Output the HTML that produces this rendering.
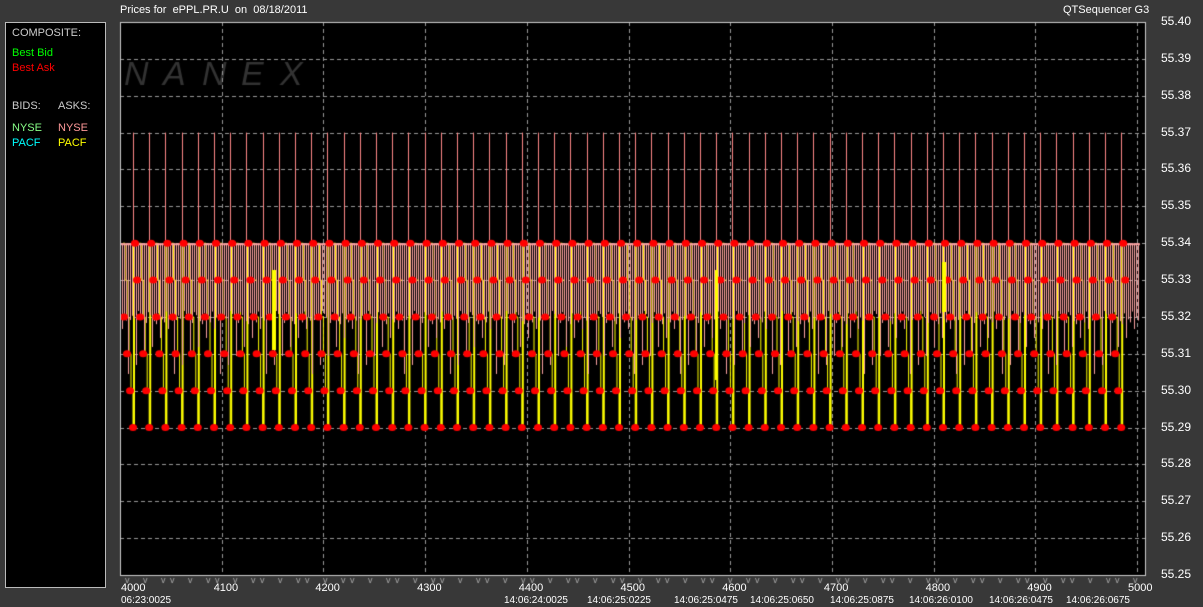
<!DOCTYPE html>
<html><head><meta charset="utf-8">
<style>
body{margin:0;width:1203px;height:607px;background:#383838;overflow:hidden;font-family:"Liberation Sans",sans-serif;font-size:11px;color:#fff;position:relative}
.a{position:absolute;white-space:nowrap}
#lp{position:absolute;left:5px;top:22px;width:99px;height:564px;background:#000;border:1px solid #bbb}
#cv{position:absolute;left:0;top:0}
.y{position:absolute;left:1161px;font-size:12px;color:#fff}
</style></head><body>
<div class="a" style="left:120px;top:4px">Prices for&nbsp; ePPL.PR.U&nbsp; on&nbsp; 08/18/2011</div>
<div class="a" style="left:1063px;top:4px">QTSequencer G3</div>
<div id="lp">
<div class="a" style="left:6px;top:4px;color:#ccc">COMPOSITE:</div>
<div class="a" style="left:6px;top:24px;color:#0f0">Best Bid</div>
<div class="a" style="left:6px;top:39px;color:#f00">Best Ask</div>
<div class="a" style="left:6px;top:77px;color:#ccc">BIDS:</div>
<div class="a" style="left:52px;top:77px;color:#ccc">ASKS:</div>
<div class="a" style="left:6px;top:99px;color:#8f8">NYSE</div>
<div class="a" style="left:52px;top:99px;color:#f99">NYSE</div>
<div class="a" style="left:6px;top:114px;color:#0ff">PACF</div>
<div class="a" style="left:52px;top:114px;color:#ff0">PACF</div>
</div>
<canvas id="cv" width="1203" height="607"></canvas>
<div id="lbl"></div>
<script>
var c=document.getElementById('cv').getContext('2d');
var L=120,T=22,R=1146,B=575;
c.fillStyle='#000';c.fillRect(L,T,R-L,B-T);
function Y(p){return T+(55.40-p)/0.01*36.87;}
c.font='italic 34px "Liberation Sans",sans-serif';c.fillStyle='#333';
var nx=['N','A','N','E','X'];for(var i=0;i<5;i++)c.fillText(nx[i],124+i*39,85);
c.strokeStyle='#999';c.setLineDash([4,3]);c.lineWidth=1;
for(var k=1;k<15;k++){var y=Math.round(Y(55.40-k*0.01))+.5;c.beginPath();c.moveTo(L,y);c.lineTo(R,y);c.stroke();}
for(var k=1;k<=10;k++){var x=Math.round(L+k*101.7)+.5;c.beginPath();c.moveTo(x,T);c.lineTo(x,B);c.stroke();}
c.setLineDash([]);
var y34=Y(55.34),y32=Y(55.32),y37=Y(55.37),y29=Y(55.29);
var P=16.2;
// yellow first
for(var i=0;i<62;i++){var x0=133+i*P;if(x0>1135)break;
 c.strokeStyle='#ff0';c.lineWidth=1;c.beginPath();
 var xs=x0-10;c.moveTo(xs,y34);
 for(var s=0;s<=5;s++){var yy=Y(55.34-s*0.01);c.lineTo(xs+s*2,yy);c.lineTo(xs+s*2+2,yy);}
 c.lineTo(x0+1,y29);c.stroke();
 c.lineWidth=2;c.beginPath();c.moveTo(x0+1,y29);c.lineTo(x0+1,y34);c.stroke();c.lineWidth=1;
}
// pink band
c.strokeStyle='#f9a0a0';
for(var x=122;x<1140;x+=2){var d=(x*37)%23;c.beginPath();c.moveTo(x+.5,y34);c.lineTo(x+.5,y32+ (d%3==0? d*3 : d*0.6)-6);c.stroke();}
c.fillStyle='#f9a0a0';c.fillRect(L,y34,R-L-6,2);
for(var i=0;i<62;i++){var x0=133+i*P;if(x0>1135)break;
 c.strokeStyle='#f88';c.beginPath();c.moveTo(Math.round(x0)+.5,y37);c.lineTo(Math.round(x0)+.5,y34);c.stroke();
 c.fillStyle='#f00';
 var dx=[2,4,-9,-6,-3,0];
 for(var s=0;s<6;s++){c.beginPath();c.ellipse(x0+dx[s],Y(55.34-s*0.01),4,3.5,0,0,7);c.fill();}
}
c.fillStyle='#ff0';c.fillRect(272,270,4,80);c.fillRect(715,270,3,110);c.fillRect(942,262,4,50);
c.strokeStyle='#ccc';c.strokeRect(L+.5,T+.5,R-L-1,B-T);
c.fillStyle='#aaa';c.font='9px "Liberation Sans",sans-serif';
for(var x=125;x<1140;x+=9){if((x*7)%5<3)c.fillText('v',x,583);}
var h='';
var pr=['55.40','55.39','55.38','55.37','55.36','55.35','55.34','55.33','55.32','55.31','55.30','55.29','55.28','55.27','55.26','55.25'];
for(var k=0;k<16;k++)h+='<div class="y" style="top:'+(Y(55.40-k*0.01)-8)+'px">'+pr[k]+'</div>';
for(var k=0;k<=10;k++)h+='<div class="a" style="left:'+(k==10?1128:L+1+k*101.7-(k?9:0))+'px;top:582px">'+(4000+k*100)+'</div>';
var t=[[121,'06:23:0025'],[504,'14:06:24:0025'],[587,'14:06:25:0225'],[674,'14:06:25:0475'],[750,'14:06:25:0650'],[830,'14:06:25:0875'],[909,'14:06:26:0100'],[989,'14:06:26:0475'],[1066,'14:06:26:0675']];
t.forEach(function(a){h+='<div class="a" style="left:'+a[0]+'px;top:595px;font-size:10px">'+a[1]+'</div>';});
document.getElementById('lbl').innerHTML=h;
</script>
</body></html>
